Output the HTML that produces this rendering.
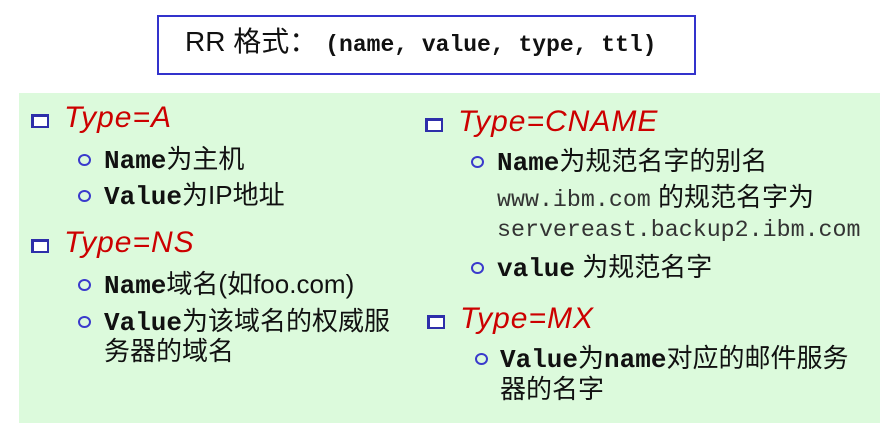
<!DOCTYPE html>
<html><head><meta charset="utf-8"><style>
body{margin:0;width:880px;height:423px;background:#fff;position:relative;overflow:hidden;font-family:"Liberation Sans","Noto Sans CJK SC",sans-serif}
.t{position:absolute;white-space:nowrap;line-height:1}
.box{position:absolute;left:157px;top:15px;width:535px;height:56px;border:2px solid #3333cc;background:#fff}
.green{position:absolute;left:19px;top:93px;width:861px;height:330px;background:#dcfadc}
.h{font-size:30px;color:#cc0000;font-family:"Liberation Sans",sans-serif;font-style:italic;letter-spacing:1px}
.sq{position:absolute;width:18px;height:14px;border:2px solid #2e2eaa;border-top-width:3px;border-left-width:3px;background:#fff;box-sizing:border-box}
.ci{position:absolute;width:13px;height:12px;border:2px solid #3a3acc;border-radius:50%;box-sizing:border-box}
.s{font-size:26px;color:#111}
.m{font-family:"Liberation Mono",monospace;font-weight:bold;font-size:26px}
.mn{font-family:"Liberation Mono",monospace;color:#333;font-size:23.3px}
</style></head><body>
<div class="box"></div>
<div class="t" style="left:185px;top:28px;font-size:28px;color:#111">RR 格式：<span style="font-family:'Liberation Mono',monospace;font-weight:bold;font-size:23px;margin-left:8px">(name, value, type, ttl)</span></div>
<div class="green"></div>

<div class="sq" style="left:31px;top:114px"></div>
<div class="t h" style="left:64px;top:103px">Type=A</div>
<div class="ci" style="left:78px;top:154px"></div>
<div class="t s" style="left:104px;top:146px"><span class="m">Name</span>为主机</div>
<div class="ci" style="left:78px;top:190px"></div>
<div class="t s" style="left:104px;top:182px"><span class="m">Value</span>为IP地址</div>

<div class="sq" style="left:31px;top:239px"></div>
<div class="t h" style="left:64px;top:228px">Type=NS</div>
<div class="ci" style="left:78px;top:279px"></div>
<div class="t s" style="left:104px;top:271px"><span class="m">Name</span>域名(如foo.com)</div>
<div class="ci" style="left:78px;top:316px"></div>
<div class="t s" style="left:104px;top:308px"><span class="m">Value</span>为该域名的权威服</div>
<div class="t s" style="left:104px;top:338px">务器的域名</div>

<div class="sq" style="left:425px;top:118px"></div>
<div class="t h" style="left:458px;top:107px">Type=CNAME</div>
<div class="ci" style="left:471px;top:156px"></div>
<div class="t s" style="left:497px;top:148px"><span class="m">Name</span>为规范名字的别名</div>
<div class="t s" style="left:497px;top:184px"><span class="mn">www.ibm.com</span> 的规范名字为</div>
<div class="t s mn" style="left:497px;top:219px">servereast.backup2.ibm.com</div>
<div class="ci" style="left:471px;top:262px"></div>
<div class="t s" style="left:497px;top:254px"><span class="m">value</span> 为规范名字</div>

<div class="sq" style="left:427px;top:315px"></div>
<div class="t h" style="left:460px;top:304px">Type=MX</div>
<div class="ci" style="left:475px;top:353px"></div>
<div class="t s" style="left:500px;top:345px"><span class="m">Value</span>为<span class="m">name</span>对应的邮件服务</div>
<div class="t s" style="left:500px;top:376px">器的名字</div>
</body></html>
